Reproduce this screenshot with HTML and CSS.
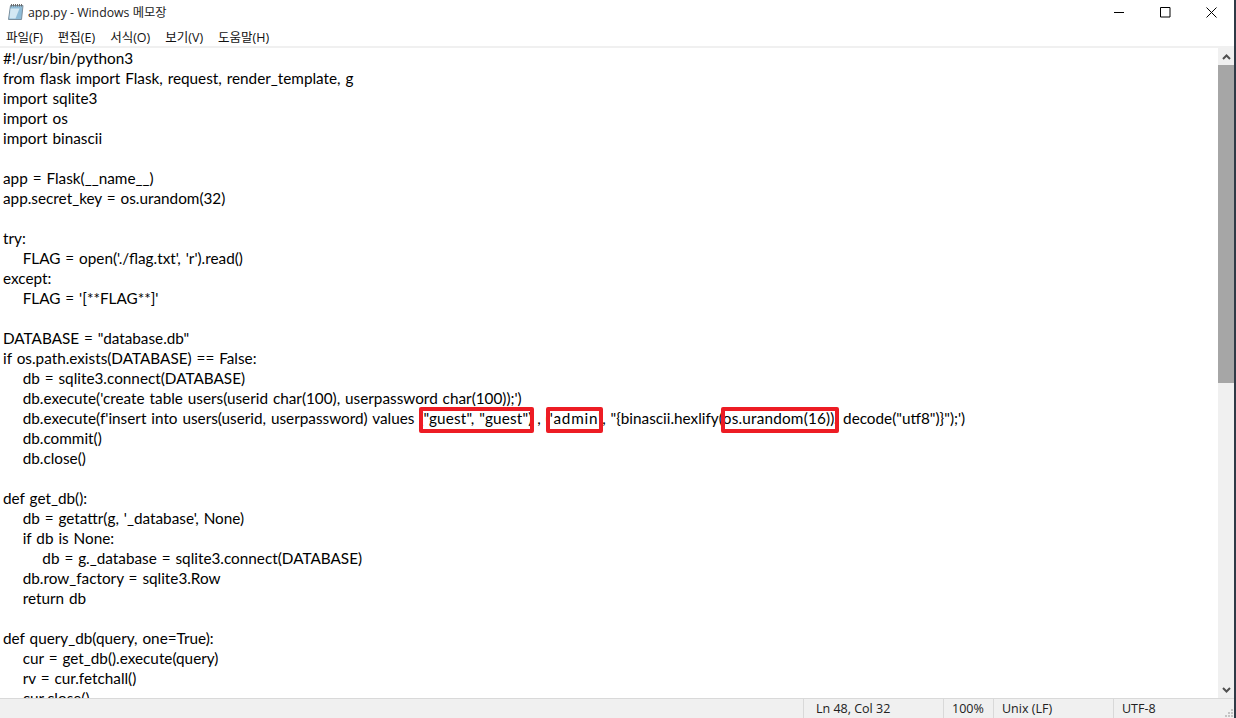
FILE: index.html
```html
<!DOCTYPE html>
<html lang="ko">
<head>
<meta charset="utf-8">
<title>app.py - Windows 메모장</title>
<link rel="stylesheet" href="styles.css">
</head>
<body>
<div class="window">
  <header class="titlebar">
    <svg class="app-icon" width="18" height="18" viewBox="0 0 18 18">
      <path d="M4.500 2.500h12.500l-1.500 14H2.500z" fill="#8fbcd8" stroke="#7b8f9e"/>
      <path d="M4.500 5.500L3.500 15.500h6l4-10z" fill="#d4e8f3"/>
      <path d="M5.500 1v2.500M7.500 1v2.500M9.500 1v2.500M11.500 1v2.500M13.500 1v2.500M15.500 1v2.500" stroke="#6a6a6a"/>
    </svg>
    <span class="title">app.py - Windows 메모장</span>
    <div class="controls">
      <span class="control"><svg width="11" height="11" viewBox="0 0 11 11"><path d="M0 5.500h10" stroke="#000" fill="none"/></svg></span>
      <span class="control"><svg width="11" height="11" viewBox="0 0 11 11"><path d="M.5.500h9.500v9.500H.500z" stroke="#000" fill="none"/></svg></span>
      <span class="control"><svg width="11" height="11" viewBox="0 0 11 11"><path d="M.5.500l10 10M10.500.500l-10 10" stroke="#000" fill="none"/></svg></span>
    </div>
  </header>
  <nav class="menubar">
    <span>파일(F)</span><span>편집(E)</span><span>서식(O)</span><span>보기(V)</span><span>도움말(H)</span>
  </nav>
  <main class="body">
    <pre class="code">#!/usr/bin/python3
from flask import Flask, request, render_template, g
import sqlite3
import os
import binascii

app = Flask(__name__)
app.secret_key = os.urandom(32)

try:
    FLAG = open('./flag.txt', 'r').read()
except:
    FLAG = '[**FLAG**]'

DATABASE = "database.db"
if os.path.exists(DATABASE) == False:
    db = sqlite3.connect(DATABASE)
    db.execute('create table users(userid char(100), userpassword char(100));')
    db.execute(f'insert into users(userid, userpassword) values (<span class="sp-guest">"guest", "guest"</span>) , (<span class="sp-admin">'admin'</span>, "{binascii.hexlify(<span class="sp-random">os.urandom(16)</span><span class="sp-close">).</span>decode("utf8")}");')
    db.commit()
    db.close()

def get_db():
    db = getattr(g, '_database', None)
    if db is None:
        db = g._database = sqlite3.connect(DATABASE)
    db.row_factory = sqlite3.Row
    return db

def query_db(query, one=True):
    cur = get_db().execute(query)
    rv = cur.fetchall()
    cur.close()</pre>
    <i class="mark mark-guest"></i>
    <i class="mark mark-admin"></i>
    <i class="mark mark-random"></i>
    <aside class="scrollbar">
      <span class="arrow"><svg width="9" height="6" viewBox="0 0 9 6"><path d="M1 5l3.500-3.500L8 5" fill="none" stroke="#505050" stroke-width="2"/></svg></span>
      <div class="track"><div class="thumb"></div></div>
      <span class="arrow"><svg width="9" height="6" viewBox="0 0 9 6"><path d="M1 1l3.500 3.500L8 1" fill="none" stroke="#505050" stroke-width="2"/></svg></span>
    </aside>
  </main>
  <footer class="statusbar">
    <span class="cell cell-pos">Ln 48, Col 32</span>
    <span class="cell cell-zoom">100%</span>
    <span class="cell cell-eol">Unix (LF)</span>
    <span class="cell cell-enc">UTF-8</span>
    <svg class="grip" width="10" height="10" viewBox="0 0 10 10"><path d="M7 1h2v2H7zM4 4h2v2H4zM7 4h2v2H7zM1 7h2v2H1zM4 7h2v2H4zM7 7h2v2H7z" fill="#c4c4c4"/></svg>
  </footer>
</div>
</body>
</html>
```
FILE: styles.css
```css
* { box-sizing: border-box; }
html, body { margin: 0; height: 100%; overflow: hidden; background: #fff; }
body { font-family: "Open Sans", "Noto Sans CJK KR", sans-serif; color: #000; }
.window { height: 718px; width: 1236px; display: flex; flex-direction: column; border-right: 2px solid #2f3a46; }
.titlebar { height: 30px; flex: none; display: flex; align-items: center; padding: 0 0 6px 6px; }
.app-icon { flex: none; margin-right: 4px; }
.title { font-size: 12.3px; color: #222; }
.controls { margin-left: auto; display: flex; }
.control { width: 46px; height: 24px; display: flex; align-items: center; justify-content: center; }
.menubar { height: 16px; flex: none; display: flex; gap: 15px; padding: 0 0 3px 6px; font-size: 12.500px; align-items: center; color: #111; }
.body { position: relative; flex: 1; min-height: 0; display: flex; border-top: 2px solid #f0f0f0; overflow: hidden; }
.code { flex: 1; margin: 0; padding: 0 0 0 3px; overflow: hidden; font-family: "Lato", "Noto Sans CJK KR", sans-serif; font-size: 15.300px; word-spacing: 1px; line-height: 20px; color: #000; }
.sp-guest { letter-spacing: .15px; }
.sp-admin { letter-spacing: .8px; }
.sp-random { letter-spacing: .2px; }
.sp-close { letter-spacing: -.5px; padding-right: 6px; }
.mark { position: absolute; border: 4px solid #ed1c24; border-radius: 2px; display: block; }
.mark-guest { left: 419px; top: 359px; width: 115px; height: 26px; }
.mark-admin { left: 546px; top: 359px; width: 57px; height: 26px; }
.mark-random { left: 721px; top: 359px; width: 118px; height: 26px; }
.scrollbar { flex: none; width: 16px; display: flex; flex-direction: column; background: #f0f0f0; }
.arrow { height: 17px; flex: none; display: flex; align-items: center; justify-content: center; }
.track { flex: 1; }
.thumb { height: 318px; background: #a6a6a6; }
.statusbar { position: relative; height: 20px; flex: none; display: flex; justify-content: flex-end; background: #f0f0f0; border-top: 1px solid #d9d9d9; font-size: 12.500px; color: #222; }
.cell { height: 100%; border-left: 1px solid #d9d9d9; display: flex; align-items: center; }
.cell-pos { width: 140px; padding-left: 12px; }
.cell-zoom { width: 50px; padding-left: 8px; }
.cell-eol { width: 120px; padding-left: 8px; }
.cell-enc { width: 121px; padding-left: 8px; }
.grip { position: absolute; right: 0; bottom: 0; }
```
